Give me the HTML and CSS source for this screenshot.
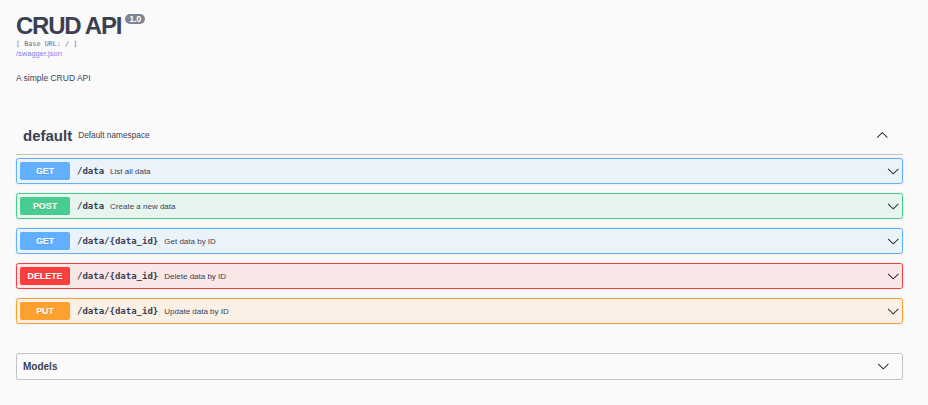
FILE: index.html
```html
<!DOCTYPE html>
<html lang="en">
<head>
<meta charset="utf-8">
<title>Swagger UI</title>
<link rel="stylesheet" href="styles.css">
</head>
<body>
<div class="wrapper">
  <section class="info">
    <h2 class="title"><span class="title-text">CRUD API</span><span class="version">1.0</span></h2>
    <div class="base-url">[ Base URL: / ]</div>
    <a class="spec-link" href="#">/swagger.json</a>
    <p class="description">A simple CRUD API</p>
  </section>

  <section class="tag-section">
    <h3 class="tag">
      <span class="tag-name">default</span>
      <small class="tag-desc">Default namespace</small>
      <svg class="arrow arrow-up" viewBox="0 0 20 20" aria-hidden="true"><path d="M17.418 6.109c.272-.268.709-.268.979 0s.271.701 0 .969l-7.908 7.83c-.27.268-.707.268-.979 0l-7.908-7.83c-.27-.268-.27-.701 0-.969.271-.268.709-.268.979 0L10 13.250l7.418-7.141z"/></svg>
    </h3>
    <div class="ops">
      <div class="op op-get">
        <span class="method">GET</span>
        <span class="path">/data</span>
        <span class="summary">List all data</span>
        <svg class="arrow" viewBox="0 0 20 20" aria-hidden="true"><path d="M17.418 6.109c.272-.268.709-.268.979 0s.271.701 0 .969l-7.908 7.83c-.27.268-.707.268-.979 0l-7.908-7.830c-.27-.268-.27-.701 0-.969.271-.268.709-.268.979 0L10 13.250l7.418-7.141z"/></svg>
      </div>
      <div class="op op-post">
        <span class="method">POST</span>
        <span class="path">/data</span>
        <span class="summary">Create a new data</span>
        <svg class="arrow" viewBox="0 0 20 20" aria-hidden="true"><path d="M17.418 6.109c.272-.268.709-.268.979 0s.271.701 0 .969l-7.908 7.83c-.27.268-.707.268-.979 0l-7.908-7.830c-.27-.268-.27-.701 0-.969.271-.268.709-.268.979 0L10 13.250l7.418-7.141z"/></svg>
      </div>
      <div class="op op-get">
        <span class="method">GET</span>
        <span class="path">/data/{data_id}</span>
        <span class="summary">Get data by ID</span>
        <svg class="arrow" viewBox="0 0 20 20" aria-hidden="true"><path d="M17.418 6.109c.272-.268.709-.268.979 0s.271.701 0 .969l-7.908 7.83c-.27.268-.707.268-.979 0l-7.908-7.830c-.27-.268-.27-.701 0-.969.271-.268.709-.268.979 0L10 13.250l7.418-7.141z"/></svg>
      </div>
      <div class="op op-delete">
        <span class="method">DELETE</span>
        <span class="path">/data/{data_id}</span>
        <span class="summary">Delete data by ID</span>
        <svg class="arrow" viewBox="0 0 20 20" aria-hidden="true"><path d="M17.418 6.109c.272-.268.709-.268.979 0s.271.701 0 .969l-7.908 7.83c-.27.268-.707.268-.979 0l-7.908-7.830c-.27-.268-.27-.701 0-.969.271-.268.709-.268.979 0L10 13.250l7.418-7.141z"/></svg>
      </div>
      <div class="op op-put">
        <span class="method">PUT</span>
        <span class="path">/data/{data_id}</span>
        <span class="summary">Update data by ID</span>
        <svg class="arrow" viewBox="0 0 20 20" aria-hidden="true"><path d="M17.418 6.109c.272-.268.709-.268.979 0s.271.701 0 .969l-7.908 7.83c-.27.268-.707.268-.979 0l-7.908-7.830c-.27-.268-.27-.701 0-.969.271-.268.709-.268.979 0L10 13.250l7.418-7.141z"/></svg>
      </div>
    </div>
  </section>

  <section class="models">
    <h4 class="models-title">
      <span>Models</span>
      <svg class="arrow" viewBox="0 0 20 20" aria-hidden="true"><path d="M17.418 6.109c.272-.268.709-.268.979 0s.271.701 0 .969l-7.908 7.83c-.27.268-.707.268-.979 0l-7.908-7.830c-.27-.268-.27-.701 0-.969.271-.268.709-.268.979 0L10 13.250l7.418-7.141z"/></svg>
    </h4>
  </section>
</div>
</body>
</html>
```

FILE: styles.css
```css
html, body {
  margin: 0;
  padding: 0;
  background: #fafafa;
}

body {
  font-family: "Liberation Sans", Arial, sans-serif;
  color: #3b4151;
}

.wrapper {
  padding: 0 25px 0 16px;
}

/* ---------- info ---------- */
.info {
  padding-top: 12px;
}

.title {
  display: flex;
  align-items: flex-start;
  margin: 0;
  font-size: 24px;
  line-height: 28px;
  font-weight: 700;
  color: #3b4151;
}

.title-text {
  letter-spacing: -1.25px;
}

.version {
  margin: 2px 0 0 4px;
  height: 10px;
  padding: 0 4px;
  border-radius: 6px;
  background: #7d8492;
  color: #fff;
  font-size: 9px;
  line-height: 10px;
  letter-spacing: -0.2px;
  font-weight: 700;
}

.base-url {
  font-family: "DejaVu Sans Mono", "Liberation Mono", monospace;
  font-size: 6.8px;
  line-height: 9px;
  color: #6b7080;
}

.spec-link {
  display: block;
  font-size: 7.5px;
  line-height: 10px;
  color: #7b7ff0;
  text-decoration: none;
}

.description {
  margin: 13.5px 0 0;
  font-size: 8.5px;
  line-height: 11px;
  color: #3b4151;
}

/* ---------- tag ---------- */
.tag-section {
  margin-top: 34.5px;
}

.tag {
  display: flex;
  align-items: center;
  height: 34px;
  margin: 0 0 3px;
  padding: 0 15px 2px 7px;
  border-bottom: 1px solid rgba(59, 65, 81, 0.3);
}

.tag-name {
  font-size: 15px;
  font-weight: 700;
  color: #3b4151;
}

.tag-desc {
  flex: 1;
  padding-left: 6px;
  font-size: 8.3px;
  font-weight: 400;
  color: #3b4151;
}

.arrow {
  width: 12.5px;
  height: 12.5px;
  flex: none;
  fill: #1f2229;
}

.arrow-up {
  transform: rotate(180deg);
}

/* ---------- operations ---------- */
.ops {
  display: flex;
  flex-direction: column;
  gap: 9px;
}

.op {
  display: flex;
  align-items: center;
  padding: 3px;
  border: 1px solid;
  border-radius: 2.5px;
  box-shadow: 0 0 2px rgba(0, 0, 0, 0.12);
}

.method {
  width: 50px;
  height: 18px;
  flex: none;
  border-radius: 2px;
  color: #fff;
  font-size: 8.9px;
  line-height: 18px;
  font-weight: 700;
  text-align: center;
  text-shadow: 0 1px 0 rgba(0, 0, 0, 0.1);
}

.path {
  margin-left: 7px;
  font-family: "DejaVu Sans Mono", "Liberation Mono", monospace;
  font-size: 9px;
  font-weight: 700;
  color: #3b4151;
}

.summary {
  flex: 1;
  margin-left: 6px;
  font-size: 8px;
  color: #3b4151;
}

.op-get {
  background: rgba(97, 175, 254, 0.1);
  border-color: #61affe;
}
.op-get .method { background: #61affe; }

.op-post {
  background: rgba(73, 204, 144, 0.1);
  border-color: #49cc90;
}
.op-post .method { background: #49cc90; }

.op-delete {
  background: rgba(249, 62, 62, 0.1);
  border-color: #f93e3e;
}
.op-delete .method { background: #f93e3e; }

.op-put {
  background: rgba(252, 161, 48, 0.1);
  border-color: #fca130;
}
.op-put .method { background: #fca130; }

/* ---------- models ---------- */
.models {
  margin-top: 29px;
  border: 1px solid rgba(59, 65, 81, 0.3);
  border-radius: 2.5px;
}

.models-title {
  display: flex;
  align-items: center;
  justify-content: space-between;
  height: 25px;
  margin: 0;
  padding: 0 13px 0 6px;
  font-size: 10px;
  font-weight: 700;
  color: #3b4151;
}
```
